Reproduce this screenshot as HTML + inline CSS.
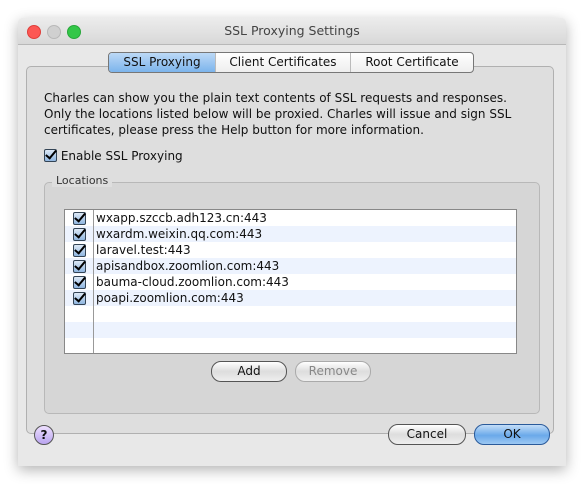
<!DOCTYPE html><html><head><style>
body{margin:0;width:582px;height:484px;background:#fff;font-family:"DejaVu Sans","Liberation Sans",sans-serif;font-size:12px;color:#111;position:relative;overflow:hidden}
.win{position:absolute;left:18px;top:18px;width:548px;height:448px;background:#e8e8e8;box-shadow:0 4px 14px rgba(0,0,0,.3);border-radius:5px 5px 0 0}
.title{height:26px;background:linear-gradient(#ececec,#d8d8d8);border-bottom:1px solid #b8b8b8;border-radius:5px 5px 0 0;text-align:center;line-height:26px;color:#444;font-size:12.5px}
.dot{position:absolute;top:7px;width:12px;height:12px;border-radius:50%}
.ab{position:absolute}
.panel{left:8px;top:48px;width:526px;height:366px;border:1px solid #b0b0b0;border-radius:5px;background:#dedede}
.tabs{left:90px;top:34px;height:19px;border:1px solid #777;border-radius:4px;background:linear-gradient(#fff,#eee);display:flex;overflow:hidden}
.tabs div{line-height:19px;border-left:1px solid #bbb;text-align:center}
.tabs div:first-child{border:0;background:linear-gradient(#bcd9f6,#7cb4ec)}
.cb{display:inline-block;width:11px;height:11px;border:1px solid #345;border-radius:2px;background:linear-gradient(#dde9f6,#8fb6e0);position:relative}
.cb:after{content:"";position:absolute;left:3px;top:-2px;width:4px;height:9px;border:solid #000;border-width:0 2px 2px 0;transform:rotate(40deg)}
.grp{left:26px;top:164px;width:494px;height:230px;border:1px solid #b8b8b8;border-radius:5px;background:#d6d6d6}
.list{left:46px;top:191px;width:451px;height:143px;border:1px solid #888;background:#fff}
.row{height:16px;line-height:16px;position:relative}
.row:nth-child(odd){background:#edf3fe}
.row .cb{position:absolute;left:8px;top:2px}
.row span{position:absolute;left:31px}
.sep{position:absolute;left:28px;top:0;bottom:0;border-left:1px solid #999}
.btn{position:absolute;height:19px;border:1px solid #555;border-radius:10px;background:linear-gradient(#fff,#ddd 50%,#eee);text-align:center;line-height:19px}
</style></head><body>
<div class="win">
<div class="title">SSL Proxying Settings</div>
<div class="dot" style="left:9px;background:#fc5753;border:1px solid #df3e3a"></div>
<div class="dot" style="left:29px;background:#d0d0d0;border:1px solid #b8b8b8"></div>
<div class="dot" style="left:49px;background:#33c748;border:1px solid #27a73a"></div>
<div class="ab panel"></div>
<div class="ab tabs"><div style="width:106px">SSL Proxying</div><div style="width:134px">Client Certificates</div><div style="width:122px">Root Certificate</div></div>
<div class="ab" style="left:26px;top:72px;line-height:16px;width:488px">Charles can show you the plain text contents of SSL requests and responses. Only the locations listed below will be proxied. Charles will issue and sign SSL certificates, please press the Help button for more information.</div>
<div class="ab" style="left:26px;top:129px;line-height:16px"><span class="cb" style="top:2px"></span> Enable SSL Proxying</div>
<div class="ab grp"></div>
<div class="ab" style="left:34px;top:156px;padding:0 4px;background:#dedede;font-size:11px;color:#333">Locations</div>
<div class="ab list"><div class="sep"></div>
<div class="row"><span class="cb"></span><span>wxapp.szccb.adh123.cn:443</span></div>
<div class="row"><span class="cb"></span><span>wxardm.weixin.qq.com:443</span></div>
<div class="row"><span class="cb"></span><span>laravel.test:443</span></div>
<div class="row"><span class="cb"></span><span>apisandbox.zoomlion.com:443</span></div>
<div class="row"><span class="cb"></span><span>bauma-cloud.zoomlion.com:443</span></div>
<div class="row"><span class="cb"></span><span>poapi.zoomlion.com:443</span></div>
<div class="row"></div><div class="row"></div><div class="row"></div>
<div class="sep"></div></div>
<div class="btn" style="left:193px;top:343px;width:74px">Add</div>
<div class="btn" style="left:277px;top:343px;width:74px;color:#888;border-color:#aaa">Remove</div>
<div class="btn" style="left:16px;top:407px;width:18px;height:18px;border-radius:50%;line-height:18px;font-weight:bold;background:linear-gradient(#eee0ff,#b9a4ef)">?</div>
<div class="btn" style="left:370px;top:406px;width:76px">Cancel</div>
<div class="btn" style="left:456px;top:406px;width:74px;border-color:#2a5a9a;background:linear-gradient(#c4def8,#6aa9ea 55%,#9cc8f2)">OK</div>
</div>
</body></html>
